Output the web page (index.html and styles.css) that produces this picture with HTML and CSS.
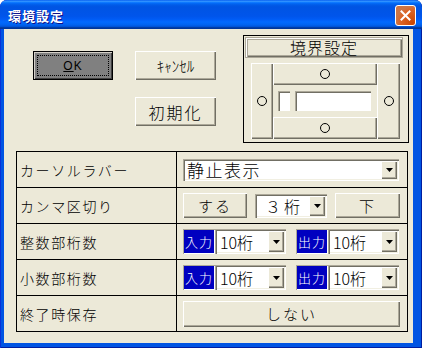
FILE: index.html
```html
<!DOCTYPE html>
<html lang="ja">
<head>
<meta charset="utf-8">
<title>環境設定</title>
<link rel="stylesheet" href="styles.css">
</head>
<body>
<div class="window">
  <div class="titlebar">
    <span class="title">環境設定</span>
    <span class="close"><svg width="11" height="11" viewBox="0 0 11 11"><path d="M1.5 1.5 L9.5 9.5 M9.5 1.5 L1.5 9.5" stroke="#fff" stroke-width="2" stroke-linecap="square"/></svg></span>
  </div>
  <div class="client">
    <div class="top">
      <div class="col1">
        <div class="btn ok"><span class="focus"><u>O</u>K</span></div>
      </div>
      <div class="col2">
        <div class="btn small">ｷｬﾝｾﾙ</div>
        <div class="btn big">初期化</div>
      </div>
      <div class="boundary">
        <div class="bhead">境界設定</div>
        <div class="bgrid">
          <div class="raised side"><span class="circle"></span></div>
          <div class="raised mid"><span class="circle"></span></div>
          <div class="center">
            <span class="field tiny"></span>
            <span class="field wide"></span>
          </div>
          <div class="raised mid"><span class="circle"></span></div>
          <div class="raised side right"><span class="circle"></span></div>
        </div>
      </div>
    </div>
    <table class="settings">
      <tr>
        <td class="label">カーソルラバー</td>
        <td class="ctrl">
          <div class="row">
            <div class="combo full"><span class="val">静止表示</span><span class="drop"><svg width="7" height="4" viewBox="0 0 7 4"><polygon points="0,0 7,0 3.5,4" fill="#000"/></svg></span></div>
          </div>
        </td>
      </tr>
      <tr>
        <td class="label">カンマ区切り</td>
        <td class="ctrl">
          <div class="row">
            <div class="btn b-suru">する</div>
            <div class="combo c-keta"><span class="val">３桁</span><span class="drop"><svg width="7" height="4" viewBox="0 0 7 4"><polygon points="0,0 7,0 3.5,4" fill="#000"/></svg></span></div>
            <div class="btn b-shita">下</div>
          </div>
        </td>
      </tr>
      <tr>
        <td class="label">整数部桁数</td>
        <td class="ctrl">
          <div class="row">
            <span class="tag">入力</span>
            <div class="combo c-num"><span class="val num">10桁</span><span class="drop"><svg width="7" height="4" viewBox="0 0 7 4"><polygon points="0,0 7,0 3.5,4" fill="#000"/></svg></span></div>
            <span class="tag tag2">出力</span>
            <div class="combo c-num"><span class="val num">10桁</span><span class="drop"><svg width="7" height="4" viewBox="0 0 7 4"><polygon points="0,0 7,0 3.5,4" fill="#000"/></svg></span></div>
          </div>
        </td>
      </tr>
      <tr>
        <td class="label">小数部桁数</td>
        <td class="ctrl">
          <div class="row">
            <span class="tag">入力</span>
            <div class="combo c-num"><span class="val num">10桁</span><span class="drop"><svg width="7" height="4" viewBox="0 0 7 4"><polygon points="0,0 7,0 3.5,4" fill="#000"/></svg></span></div>
            <span class="tag tag2">出力</span>
            <div class="combo c-num"><span class="val num">10桁</span><span class="drop"><svg width="7" height="4" viewBox="0 0 7 4"><polygon points="0,0 7,0 3.5,4" fill="#000"/></svg></span></div>
          </div>
        </td>
      </tr>
      <tr>
        <td class="label">終了時保存</td>
        <td class="ctrl">
          <div class="row">
            <div class="btn b-shinai">しない</div>
          </div>
        </td>
      </tr>
    </table>
  </div>
</div>
</body>
</html>
```
FILE: styles.css
```css
* { box-sizing: border-box; }
html, body { margin: 0; padding: 0; }
body {
  width: 422px;
  height: 348px;
  background: #ffffff;
  font-family: "Noto Sans CJK JP", "DejaVu Sans", sans-serif;
  font-weight: 300;
  color: #000;
  overflow: hidden;
}
.window {
  width: 422px;
  height: 348px;
  border-radius: 7px 7px 0 0;
  background: #0054E3;
  box-shadow: inset 1px 0 #0831D9, inset -1px 0 #001EA0, inset 0 -1px #001EA0;
  display: flex;
  flex-direction: column;
  overflow: hidden;
}
.titlebar {
  height: 29px;
  flex: none;
  display: flex;
  align-items: center;
  padding: 0 6px 0 8px;
  background: linear-gradient(to bottom, #0058EE 0%, #3593FF 4%, #288EFF 6%, #127DFF 8%, #036FFC 10%, #0262EE 14%, #0057E5 20%, #0054E3 24%, #0055EB 56%, #005BF5 66%, #026AFE 76%, #0062EF 86%, #0052D6 92%, #0040AB 94%, #003092 100%);
  border-radius: 7px 7px 0 0;
}
.title {
  color: #fff;
  font-weight: bold;
  font-size: 13px;
  letter-spacing: 1px;
  text-shadow: 1px 1px #0F1089;
  flex: 1;
  padding-top: 1px;
}
.close {
  width: 21px;
  height: 21px;
  border: 1px solid #fff;
  border-radius: 3px;
  background: radial-gradient(circle at 90% 90%, #CC4600 0%, #DC6527 55%, #CD7546 70%), #E0643C;
  display: flex;
  align-items: center;
  justify-content: center;
  margin-top: 1px;
}
.client {
  flex: 1;
  margin: 0 9px 5px 4px;
  background: #ECE9D8;
}
.top {
  display: flex;
  align-items: flex-start;
  padding: 6px 0 0 29px;
  height: 114px;
}
.col1 { margin-top: 16px; width: 80px; }
.col2 {
  margin-top: 16px;
  margin-left: 22px;
  display: flex;
  flex-direction: column;
  gap: 17px;
}
.btn {
  background: #ECE9D8;
  box-shadow: inset 1px 1px #fff, inset -1px -1px #716F64, inset -2px -2px #ACA899;
  display: flex;
  align-items: center;
  justify-content: center;
  font-size: 15px;
  letter-spacing: 2px;
  line-height: 1;
}
.ok {
  width: 80px;
  height: 29px;
  background: #808080;
  border: 1px solid #000;
  box-shadow: inset 1px 1px #D4D0C8, inset -1px -1px #404040;
  padding: 3px;
  font-family: "Liberation Sans", sans-serif;
  font-weight: normal;
  font-size: 12px;
  letter-spacing: 1px;
}
.ok .focus {
  width: 100%;
  height: 100%;
  border: 1px dotted #000;
  display: flex;
  align-items: center;
  justify-content: center;
  line-height: 1;
}
.small {
  width: 81px;
  height: 29px;
  font-size: 15px;
  letter-spacing: 0;
}
.big {
  width: 81px;
  height: 29px;
  font-size: 16px;
  letter-spacing: 2px;
}
.boundary {
  margin-left: 27px;
  width: 166px;
  height: 108px;
  border: 1px solid #000;
  padding: 1px 5px 0 1px;
  display: flex;
  flex-direction: column;
}
.bhead {
  height: 21px;
  box-shadow: inset 1px 1px #fff, inset 2px 2px #ACA899, inset -1px -1px #716F64, inset -2px -2px #ACA899;
  border: 1px solid #ACA899;
  font-size: 16px;
  letter-spacing: 1px;
  line-height: 19px;
  text-align: center;
}
.bgrid {
  margin: 5px 0 0 6px;
  display: grid;
  grid-template-columns: 22px 104px 23px;
  grid-template-rows: 22px 32px 22px;
  width: 149px;
}
.raised {
  box-shadow: inset 1px 1px #fff, inset -1px -1px #716F64, inset -2px -2px #ACA899;
  display: flex;
  align-items: center;
  justify-content: center;
}
.side { grid-row: 1 / 4; grid-column: 1; }
.side.right { grid-column: 3; }
.mid { grid-column: 2; }
.center {
  grid-column: 2;
  display: flex;
  align-items: center;
  padding-left: 5px;
  gap: 5px;
}
.circle {
  width: 10px;
  height: 10px;
  border: 1px solid #000;
  border-radius: 50%;
}
.field {
  height: 20px;
  background: #fff;
  box-shadow: inset 1px 1px #ACA899, inset 2px 2px #716F64, inset -1px -1px #fff;
}
.field.tiny { width: 12px; }
.field.wide { width: 76px; }
.settings {
  margin: 8px 0 0 12px;
  border-collapse: collapse;
  width: 392px;
}
.settings td {
  border: 1px solid #000;
  height: 36px;
  padding: 0;
}
.settings td.label {
  width: 160px;
  padding-left: 3px;
  font-size: 14px;
  letter-spacing: 1.6px;
  line-height: 1;
}
.settings td.ctrl { padding: 0 7px 0 6px; }
.row {
  display: flex;
  align-items: center;
}
.combo {
  display: flex;
  align-items: center;
  background: #fff;
  box-shadow: inset 1px 1px #ACA899, inset 2px 2px #716F64, inset -1px -1px #fff, inset -2px -2px #F1EFE2;
  padding: 2px;
  height: 24px;
}
.combo .val {
  flex: 1;
  font-size: 17px;
  letter-spacing: 1.5px;
  line-height: 1;
  padding-left: 2px;
}
.combo .val.num {
  font-size: 16px;
  letter-spacing: 0;
  padding-left: 3px;
}
.drop {
  width: 16px;
  height: 100%;
  background: #ECE9D8;
  box-shadow: inset 1px 1px #fff, inset -1px -1px #716F64, inset -2px -2px #ACA899;
  display: flex;
  align-items: center;
  justify-content: center;
}
.full { width: 216px; height: 22px; }
.b-suru { width: 64px; height: 25px; }
.c-keta { width: 72px; margin-left: 8px; }
.c-keta .val { padding-left: 8px; font-size: 16px; letter-spacing: 3px; }
.b-shita { width: 65px; height: 25px; margin-left: 8px; }
.tag {
  width: 32px;
  height: 25px;
  background: #0000C0;
  color: #fff;
  font-size: 13px;
  letter-spacing: 1px;
  line-height: 1;
  display: flex;
  align-items: center;
  justify-content: center;
  box-shadow: inset 1px 1px #ACA899, inset -1px -1px #fff;
}
.tag2 { margin-left: 10px; }
.c-num { width: 71px; height: 25px; }
.b-shinai { width: 217px; height: 26px; }
```
